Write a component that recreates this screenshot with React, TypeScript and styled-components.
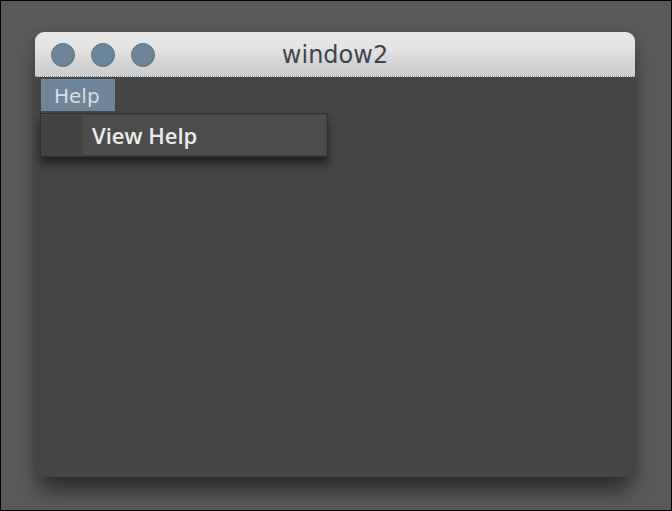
import React from "react";
import styled, { createGlobalStyle } from "styled-components";

const Global = createGlobalStyle`
  html, body { margin: 0; padding: 0; background: #595959; }
  * { box-sizing: border-box; }
`;

const Screen = styled.div`
  width: 672px;
  height: 511px;
  border: 1px solid #000;
  background: #5a5a5a;
  padding: 31px 0 0 34px;
  overflow: hidden;
  font-family: "DejaVu Sans", "Liberation Sans", sans-serif;
`;

const Window = styled.div`
  width: 600px;
  height: 445px;
  border-radius: 9px;
  background: #454545;
  box-shadow: 0 18px 22px -4px rgba(0, 0, 0, 0.5), 0 0 14px rgba(0, 0, 0, 0.12);
  display: flex;
  flex-direction: column;
`;

const TitleBar = styled.div`
  height: 45px;
  flex: none;
  border-radius: 9px 9px 0 0;
  background: linear-gradient(#e7e7e7 0%, #e4e4e4 35%, #d4d4d4 70%, #cdcdcd 100%);
  border-bottom: 1px dotted #7189a0;
  display: grid;
  grid-template-areas: "bar";
  align-items: center;
  padding: 2px 0 0 16px;
`;

const Lights = styled.div`
  grid-area: bar;
  justify-self: start;
  display: flex;
  gap: 16px;
`;

const Light = styled.div`
  width: 24px;
  height: 24px;
  border-radius: 50%;
  background: #6d8598;
  border: 1px solid #5c7284;
`;

const Title = styled.div`
  grid-area: bar;
  justify-self: center;
  margin-left: -16px;
  font-size: 24px;
  color: #3e4550;
`;

const Body = styled.div`
  position: relative;
  flex: 1;
  padding: 2px 0 0 6px;
`;

const MenuBar = styled.div`
  display: flex;
`;

const MenuItem = styled.div`
  width: 74px;
  height: 32px;
  background: #6e8699;
  color: #d9dde0;
  font-size: 20px;
  line-height: 34px;
  padding-left: 13px;
`;

const Dropdown = styled.div`
  position: absolute;
  left: 5px;
  top: 36px;
  width: 288px;
  height: 44px;
  background: #434343;
  border: 1px dotted #222;
  box-shadow: 0 7px 8px rgba(0, 0, 0, 0.5);
  display: flex;
  padding: 1px 1px 1px 42px;
`;

const DropItem = styled.div`
  flex: 1;
  background: #4c4c4c;
  color: #ececec;
  font-family: "Open Sans", "DejaVu Sans", sans-serif;
  font-weight: 600;
  font-size: 22px;
  line-height: 40px;
  padding-left: 9px;
`;

export default function App() {
  return (
    <>
      <Global />
      <Screen>
        <Window>
          <TitleBar>
            <Lights>
              <Light />
              <Light />
              <Light />
            </Lights>
            <Title>window2</Title>
          </TitleBar>
          <Body>
            <MenuBar>
              <MenuItem>Help</MenuItem>
            </MenuBar>
            <Dropdown>
              <DropItem>View Help</DropItem>
            </Dropdown>
          </Body>
        </Window>
      </Screen>
    </>
  );
}
